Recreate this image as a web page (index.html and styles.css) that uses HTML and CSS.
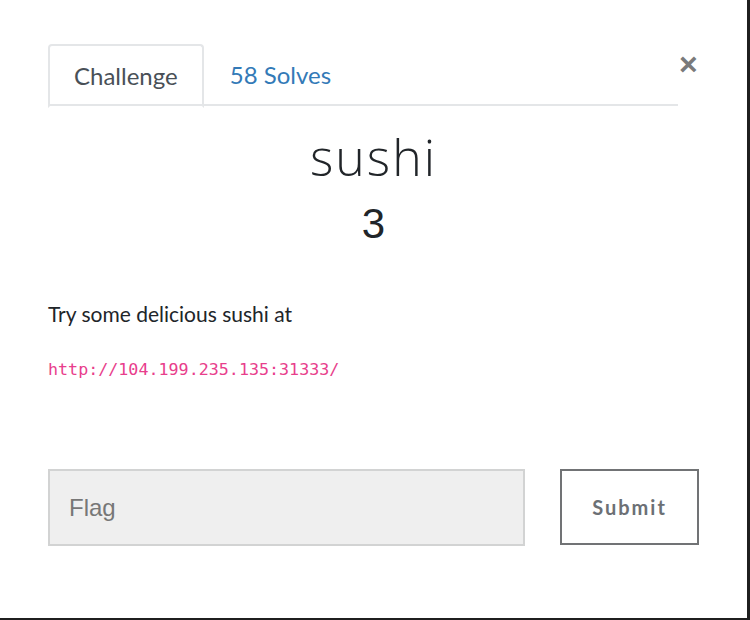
FILE: index.html
```html
<!DOCTYPE html>
<html>
<head>
<meta charset="utf-8">
<link rel="stylesheet" href="styles.css">
</head>
<body>
<div class="modal">
  <button class="close" aria-label="Close">&times;</button>
  <div class="modal-body">
    <ul class="tabs">
      <li class="tab active">Challenge</li>
      <li class="tab link">58 Solves</li>
    </ul>
    <h2 class="title">sushi</h2>
    <h3 class="points">3</h3>
    <p class="desc">Try some delicious sushi at</p>
    <p class="url"><code>http://104.199.235.135:31333/</code></p>
    <div class="submit-row">
      <input class="flag" type="text" placeholder="Flag">
      <button class="submit">Submit</button>
    </div>
  </div>
</div>
</body>
</html>
```
FILE: styles.css
```css
html, body {
  margin: 0;
  padding: 0;
  height: 100%;
}
body {
  background: #1f1f1f;
}
.modal {
  position: relative;
  width: 747px;
  height: 618px;
  background: #ffffff;
  box-sizing: border-box;
}
.close {
  position: absolute;
  top: 48px;
  left: 679px;
  border: none;
  background: none;
  padding: 0;
  font-family: "Liberation Sans", Arial, sans-serif;
  font-weight: bold;
  font-size: 32px;
  line-height: 32px;
  color: #7a7a7a;
}
.modal-body {
  padding: 44px 48px 0 48px;
  font-family: Lato, sans-serif;
  color: #212529;
}
.tabs {
  list-style: none;
  margin: 0 21px 0 0;
  padding: 0;
  display: flex;
  border-bottom: 2px solid #e4e6e8;
  height: 60px;
}
.tab {
  font-size: 24px;
  padding: 0 26px;
  line-height: 62px;
  height: 60px;
}
.tab.active {
  color: #495057;
  border: 2px solid #e4e6e8;
  border-bottom-color: #ffffff;
  border-radius: 4px 4px 0 0;
  margin-bottom: -2px;
  padding: 0 24px;
  line-height: 60px;
}
.tab.link {
  color: #337ab7;
}
.title {
  margin: 21px 0 0 0;
  text-align: center;
  font-family: "Open Sans", sans-serif;
  font-weight: 300;
  font-size: 50px;
  letter-spacing: 2px;
  line-height: 60px;
  color: #212529;
}
.points {
  margin: 9px 0 0 0;
  text-align: center;
  font-family: "Liberation Sans", Arial, sans-serif;
  font-weight: normal;
  font-size: 42px;
  line-height: 56px;
  color: #212529;
}
.desc {
  margin: 47px 0 0 0;
  font-size: 21px;
  line-height: 30px;
  color: #212529;
}
.url {
  margin: 28px 0 0 0;
  line-height: 24px;
}
.url code {
  font-family: "DejaVu Sans Mono", monospace;
  font-size: 16.7px;
  color: #e83e8c;
}
.submit-row {
  display: flex;
  justify-content: space-between;
  margin-top: 88px;
}
.flag {
  width: 477px;
  height: 77px;
  box-sizing: border-box;
  background: #efefef;
  border: 2px solid #d2d3d3;
  padding: 0 19px;
  font-family: "Liberation Sans", Arial, sans-serif;
  font-size: 24px;
  color: #495057;
  outline: none;
}
.flag::placeholder {
  color: #777777;
}
.submit {
  width: 139px;
  height: 76px;
  box-sizing: border-box;
  background: #ffffff;
  border: 2px solid #717375;
  font-family: Lato, sans-serif;
  font-weight: bold;
  font-size: 20px;
  letter-spacing: 2px;
  color: #6c7075;
}
```
